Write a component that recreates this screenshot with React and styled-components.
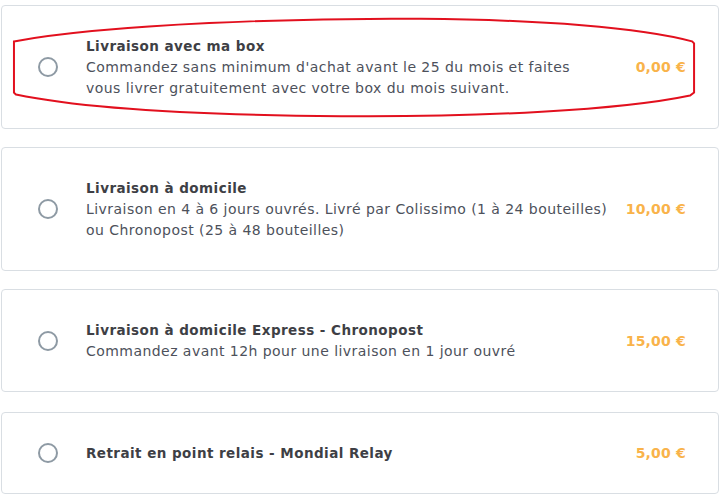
import React from 'react';
import styled, { createGlobalStyle } from 'styled-components';

const GlobalStyle = createGlobalStyle`
  html, body {
    margin: 0;
    padding: 0;
    background: #ffffff;
  }
  body {
    font-family: "DejaVu Sans", "Open Sans", sans-serif;
  }
`;

// lines are kept as in the original layout
const options = [
  {
    id: 'box',
    title: 'Livraison avec ma box',
    lines: [
      "Commandez sans minimum d'achat avant le 25 du mois et faites",
      'vous livrer gratuitement avec votre box du mois suivant.',
    ],
    price: '0,00 €',
    gap: 18,
    circled: true,
  },
  {
    id: 'home',
    title: 'Livraison à domicile',
    lines: [
      'Livraison en 4 à 6 jours ouvrés. Livré par Colissimo (1 à 24 bouteilles)',
      'ou Chronopost (25 à 48 bouteilles)',
    ],
    price: '10,00 €',
    gap: 18,
  },
  {
    id: 'express',
    title: 'Livraison à domicile Express - Chronopost',
    lines: ['Commandez avant 12h pour une livraison en 1 jour ouvré'],
    price: '15,00 €',
    gap: 20,
  },
  {
    id: 'relay',
    title: 'Retrait en point relais - Mondial Relay',
    lines: [],
    price: '5,00 €',
    gap: 0,
  },
];

export default function App() {
  return (
    <>
      <GlobalStyle />
      <List>
        {options.map((o) => (
          <Card key={o.id} $gap={o.gap}>
            <Radio />
            <Text>
              <Title>{o.title}</Title>
              {o.lines.map((l) => (
                <Desc key={l}>{l}</Desc>
              ))}
            </Text>
            <Price>{o.price}</Price>
            {o.circled && (
              <Scribble viewBox="0 0 718 124" preserveAspectRatio="none">
                <path
                  d="M12 36 C 110 18, 300 12, 420 13 C 540 14, 640 22, 692 36 L 694 38 L 694 88 L 690 91 C 620 106, 480 113, 340 112 C 200 111, 80 104, 14 90 L 12 88 Z"
                  fill="none"
                  stroke="#e2101e"
                  strokeWidth="2"
                />
              </Scribble>
            )}
          </Card>
        ))}
      </List>
    </>
  );
}

const List = styled.div`
  width: 718px;
  padding: 5px 0 0 1px;
  display: flex;
  flex-direction: column;
`;

const Card = styled.div`
  position: relative;
  display: flex;
  align-items: center;
  box-sizing: border-box;
  padding: 29.5px 32px 29.5px 36px;
  margin-bottom: ${(p) => p.$gap}px;
  border: 1px solid #d9dee3;
  border-radius: 4px;
  background: #fff;
`;

const Radio = styled.span`
  flex: none;
  width: 16px;
  height: 16px;
  border: 2px solid #8e9aa4;
  border-radius: 50%;
  margin-right: 28px;
`;

const Text = styled.div`
  flex: 1;
  min-width: 0;
  color: #4d515b;
  font-size: 14px;
  line-height: 21px;
  letter-spacing: 0.45px;
`;

const Title = styled.div`
  font-weight: 700;
  font-size: 13.5px;
  color: #3e3f45;
`;

const Desc = styled.div`
  font-weight: 400;
  white-space: nowrap;
`;

const Price = styled.div`
  flex: none;
  width: 80px;
  text-align: right;
  color: #f9b34a;
  font-weight: 700;
  font-size: 14px;
  letter-spacing: 0.2px;
`;

const Scribble = styled.svg`
  position: absolute;
  left: 0;
  top: 0;
  width: 100%;
  height: 100%;
  pointer-events: none;
  overflow: visible;
`;
